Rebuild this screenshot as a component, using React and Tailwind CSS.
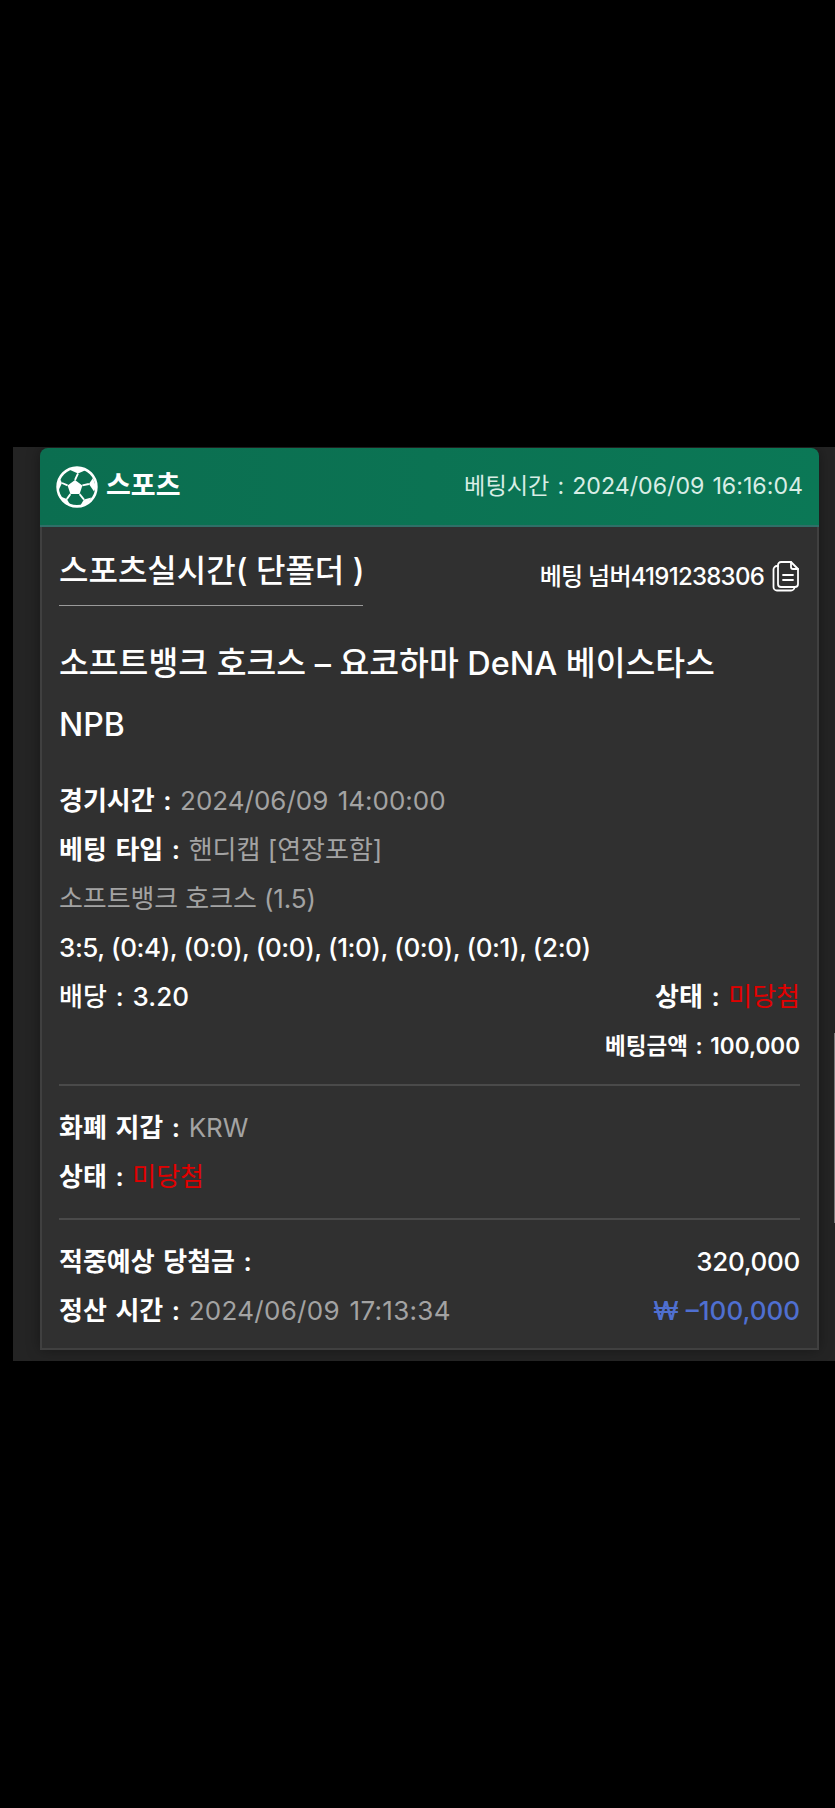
const FONT = "font-['Inter','Noto_Sans_CJK_KR',sans-serif]";

function Ball() {
  return (
    <svg width="42" height="42" viewBox="0 0 42 42" fill="none">
      <circle cx="21" cy="21" r="19.4" stroke="white" strokeWidth="2.6" />
      <path d="M19 14l7.400 5.400-2.800 8.700h-9.200l-2.800-8.700z" fill="white" />
      <path d="M19 14l3-6.500M26.400 19.400l6.500-1.400M23.600 28.100l4.400 5.500M14.400 28.100l-3.600 5M11.600 19.400l-5.600-2.400" stroke="white" strokeWidth="1.800" />
      <path d="M13 3.500l9 4 8-3.500-2.500-2h-12z" fill="white" />
      <path d="M32.900 18l4.100-6 3 9-2 4.500z" fill="white" />
      <path d="M28 33.600l7.500-2-5.500 7.500-6 1z" fill="white" />
      <path d="M10.800 33.100l-6.500-2.500 5 7.400 5.500 2z" fill="white" />
      <path d="M6 17l-2.500-5-2.300 8 1.500 4z" fill="white" />
    </svg>
  );
}

function CopyIcon() {
  return (
    <svg className="-mt-[2px]" width="28" height="32" viewBox="0 0 28 32" fill="none" stroke="white" strokeWidth="1.8" strokeLinejoin="round" strokeLinecap="round">
      <path d="M9 2h10l7 7v15a3 3 0 0 1-3 3H9a3 3 0 0 1-3-3V5a3 3 0 0 1 3-3z" />
      <path d="M19 2v5a2 2 0 0 0 2 2h5" />
      <path d="M6 6H5a3.500 3.500 0 0 0-3.500 3.500V27A3.500 3.500 0 0 0 5 30.500h14a3.500 3.500 0 0 0 3.500-3.500" />
      <path d="M11 15h10M11 20h10" />
    </svg>
  );
}

function Row({ children }) {
  return <div className="flex h-[49px] items-center justify-between text-[26px] text-white [word-spacing:2px]">{children}</div>;
}

export default function App() {
  return (
    <div className={`relative min-h-[1808px] bg-black pt-[447px] ${FONT}`}>
      <div className="ml-[13px] h-[914px] bg-[#242424] pl-[27px] pr-[16px] pt-px">
        <div className="flex h-[902px] flex-col rounded-t-[8px] shadow-[0_0_14px_rgba(0,0,0,0.35)]">
          <div className="flex h-[79px] items-center justify-between rounded-t-[8px] border-b-2 border-[#2f6f68] bg-linear-to-r from-[#0b6e50] to-[#0b7856] pl-4 pr-4">
            <div className="flex items-center gap-[8px]">
              <Ball />
              <span className="text-[27px] font-semibold text-white">스포츠</span>
            </div>
            <span className="text-[23.2px] text-[#d8ede5] [word-spacing:1.5px]">베팅시간 : 2024/06/09 16:16:04</span>
          </div>

          <div className="flex-1 border-x-2 border-b-2 border-[#404040] bg-[#303030] px-[17px]">
            <div className="flex items-start justify-between">
              <h2 className="mt-[21px] w-[304px] whitespace-nowrap border-b border-[#9a9a9a] pb-[11px] text-[32px] font-medium leading-[46px] text-white">스포츠실시간( 단폴더 )</h2>
              <div className="mt-[32px] flex items-center gap-[8px]">
                <span className="text-[24px] font-medium tracking-[-0.75px] text-white">베팅 넘버4191238306</span>
                <CopyIcon />
              </div>
            </div>

            <p className="mt-[27px] whitespace-nowrap text-[32.4px] font-medium leading-[61px] text-white">소프트뱅크 호크스 – 요코하마 DeNA 베이스타스</p>
            <p className="text-[32px] font-medium leading-[61px] text-white">NPB</p>

            <div className="mt-[21px]">
              <Row><span><b className="font-semibold">경기시간 : </b><span className="text-[#a3a3a3]">2024/06/09 14:00:00</span></span></Row>
              <Row><span><b className="font-semibold">베팅 타입 : </b><span className="text-[#a3a3a3] [word-spacing:0px]">핸디캡 [연장포함]</span></span></Row>
              <Row><span className="text-[#a3a3a3] tracking-[-0.1px] [word-spacing:0px]">소프트뱅크 호크스 (1.5)</span></Row>
              <Row><span className="font-medium tracking-[-0.42px] [word-spacing:0px]">3:5, (0:4), (0:0), (0:0), (1:0), (0:0), (0:1), (2:0)</span></Row>
              <Row>
                <span className="font-medium">배당 : 3.20</span>
                <span><b className="font-semibold">상태 : </b><span className="text-[#e00000]">미당첨</span></span>
              </Row>
              <Row><span className="ml-auto text-[22.5px] font-semibold">베팅금액 : 100,000</span></Row>
            </div>

            <div className="mt-[14px] border-t-2 border-[#4a4a4a] pt-[17px]">
              <Row><span><b className="font-semibold">화폐 지갑 : </b><span className="text-[#a3a3a3]">KRW</span></span></Row>
              <Row><span><b className="font-semibold">상태 : </b><span className="text-[#e00000]">미당첨</span></span></Row>
            </div>

            <div className="mt-[17px] border-t-2 border-[#4a4a4a] pt-[17px]">
              <Row>
                <b className="font-semibold">적중예상 당첨금 :</b>
                <span className="font-medium tracking-[-0.3px]">320,000</span>
              </Row>
              <Row>
                <span><b className="font-semibold">정산 시간 : </b><span className="text-[#a3a3a3] tracking-[0.3px]">2024/06/09 17:13:34</span></span>
                <span className="font-medium text-[#4f6fd0] [word-spacing:0px]">₩ –100,000</span>
              </Row>
            </div>
          </div>
        </div>
      </div>
      <div className="absolute right-0 top-[1033px] h-[190px] w-px bg-[#777777]" />
    </div>
  );
}
